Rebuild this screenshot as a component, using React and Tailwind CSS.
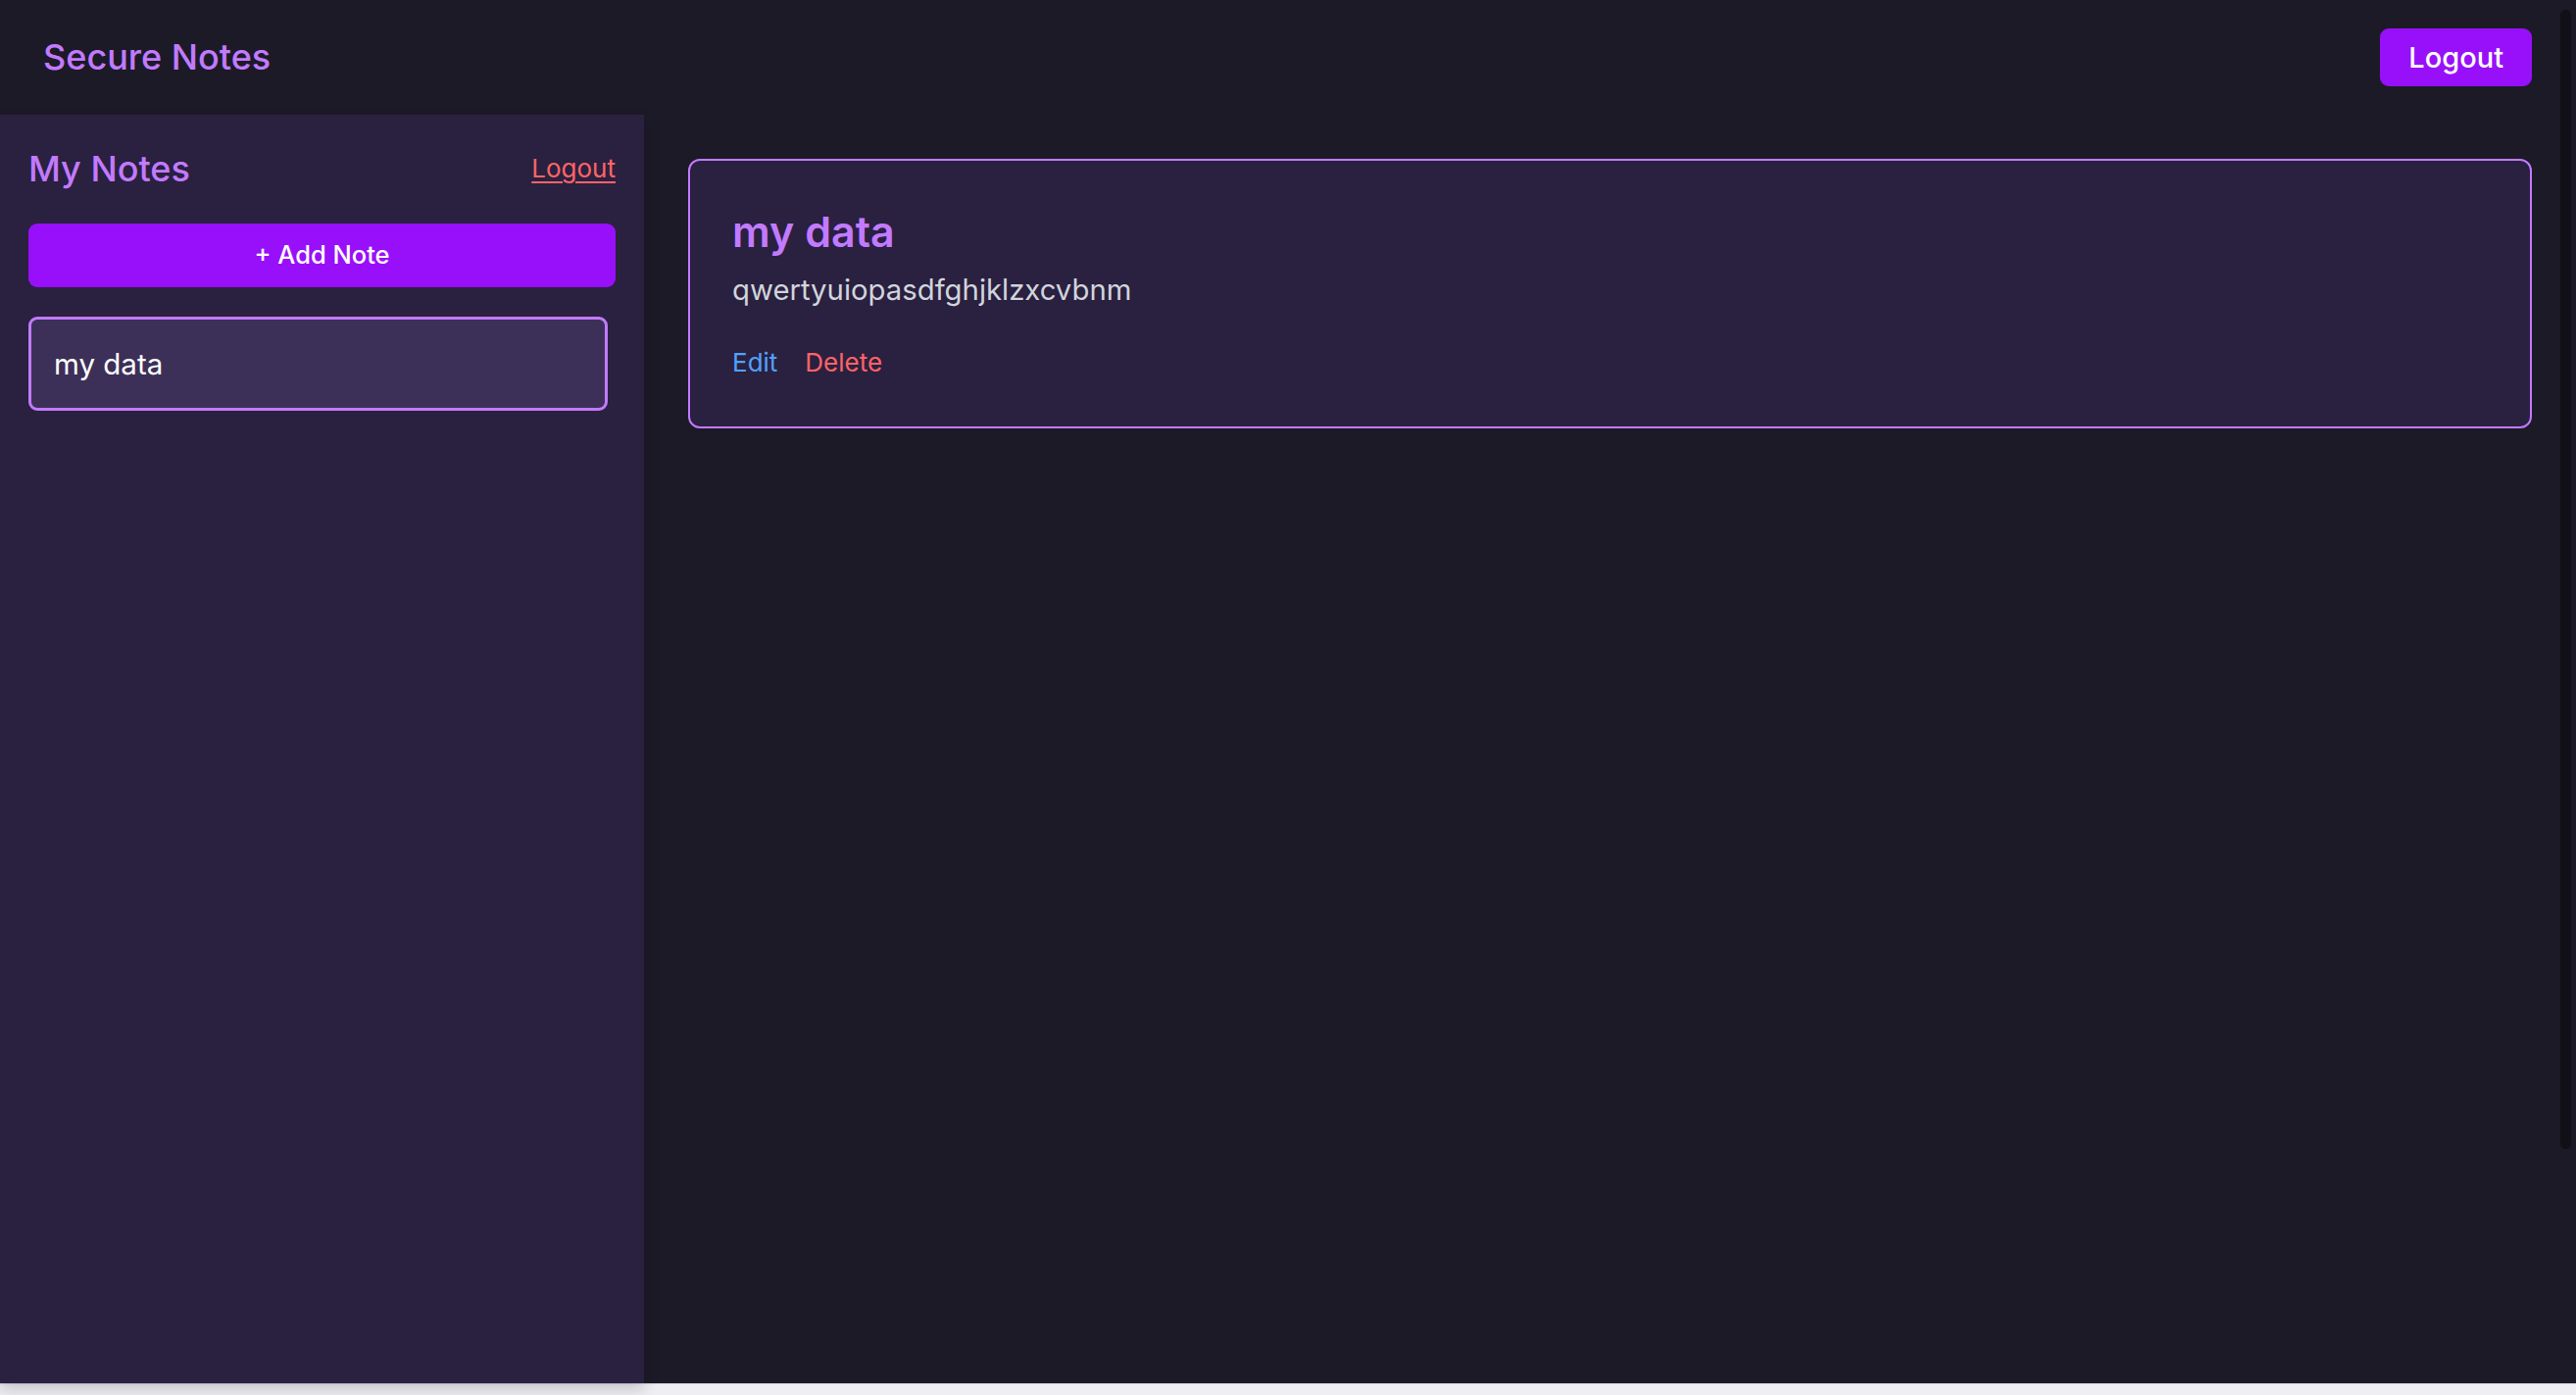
import React from "react";

export default function App() {
  return (
    <div className="font-['Inter','Noto_Sans',sans-serif] bg-[#efeef3]">
      <div className="h-[1411px] flex flex-col bg-[#1c1a27]">
        <header className="h-[117px] shrink-0 flex items-center justify-between pl-[44px] pr-[45px]">
          <h1 className="text-[36px] leading-[45px] font-medium text-[#c27aff]">Secure Notes</h1>
          <button className="h-[59px] px-[29px] rounded-[9px] bg-[#9810fa] text-white text-[29px] leading-[40px] font-medium">
            Logout
          </button>
        </header>
        <div className="flex flex-1 min-h-0">
          <aside className="w-1/4 shrink-0 bg-[#2a2040] px-[29px] pt-[31px] relative z-10 shadow-[0_6px_14px_rgba(0,0,0,0.18)]">
            <div className="flex items-center justify-between h-[48px]">
              <h2 className="text-[36px] leading-[48px] font-medium text-[#c27aff]">My Notes</h2>
              <a href="#" className="text-[26px] leading-[36px] text-[#ff6467] underline underline-offset-[4px]">
                Logout
              </a>
            </div>
            <button className="mt-[32px] w-full h-[65px] rounded-[9px] bg-[#9810fa] text-white text-[25.5px] font-medium">
              + Add Note
            </button>
            <div className="mt-[30px] mr-[8px]">
              <div className="pl-[23px] pr-[24px] py-[24px] border-[3px] border-[#c27aff] bg-[#3c3058] rounded-[9px] text-white text-[29.5px] leading-[42px]">
                my data
              </div>
            </div>
          </aside>
          <main className="flex-1 p-[45px]">
            <div className="border-2 border-[#c27aff] rounded-[12px] bg-[#2a2040] pl-[43px] pr-[40px] pt-[47px] pb-[47px]">
              <h3 className="text-[43px] leading-[50px] font-semibold text-[#c27aff]">my data</h3>
              <p className="mt-[15px] text-[29.3px] leading-[40px] text-[#d1d5dc]">qwertyuiopasdfghjklzxcvbnm</p>
              <div className="mt-[36px] flex gap-[28px] text-[26px] leading-[36px]">
                <button className="text-[#51a2ff]">Edit</button>
                <button className="text-[#ff6467]">Delete</button>
              </div>
            </div>
          </main>
        </div>
      </div>
      <div className="h-[12px] border-t border-[#cfcdd6] bg-[#efeef3]" />
      <div className="fixed top-[10px] right-[5px] w-[11px] h-[1162px] rounded-full bg-[#111017]" />
    </div>
  );
}
